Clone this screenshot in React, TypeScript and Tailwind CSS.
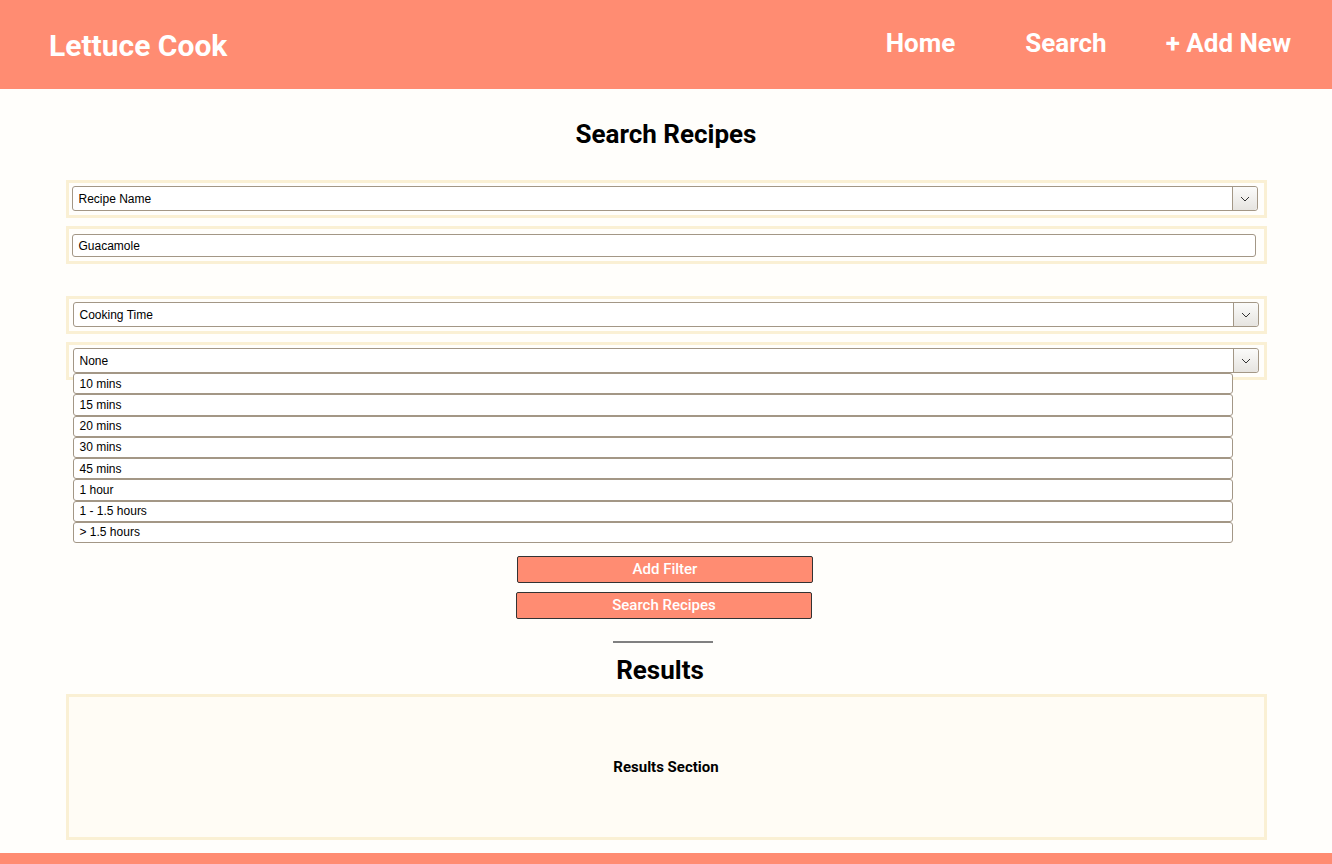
import React from "react";

const Chevron = () => (
  <svg width="10" height="6" viewBox="0 0 10 6" fill="none">
    <path d="M1 1 L5 5 L9 1" stroke="#333" strokeWidth="1" />
  </svg>
);

function SelectBox({ label }: { label: string }) {
  return (
    <div className="flex h-[25px] w-full items-stretch rounded-[3px] border border-[#a39786] bg-white">
      <div className="flex flex-1 items-center pl-[6px] text-[12px] text-black" style={{ fontFamily: '"Liberation Sans", Arial, sans-serif' }}>
        {label}
      </div>
      <div className="flex w-[25px] items-center justify-center rounded-r-[3px] border-l border-[#a39786] bg-gradient-to-b from-[#fbfbfa] to-[#e6e4e0]">
        <Chevron />
      </div>
    </div>
  );
}

const options = ["10 mins", "15 mins", "20 mins", "30 mins", "45 mins", "1 hour", "1 - 1.5 hours", "> 1.5 hours"];

export default function App() {
  const roboto = { fontFamily: 'Roboto, "Liberation Sans", sans-serif' };
  return (
    <div className="h-[864px] overflow-hidden bg-[#fffefb] flex flex-col" style={roboto}>
      <header className="flex h-[89px] shrink-0 items-center justify-between bg-[#ff8c72] pl-[49px] pr-[41px]">
        <div className="text-[30px] font-bold text-white mt-[1px]">Lettuce Cook</div>
        <nav className="flex items-center text-[26px] font-bold text-white -mt-[3px]">
          <span>Home</span>
          <span className="ml-[70px]">Search</span>
          <span className="ml-[59px]">+ Add New</span>
        </nav>
      </header>

      <main className="flex-1 flex flex-col items-center">
        <h1 className="mt-[28px] text-[26px] font-bold leading-[34px] text-black">Search Recipes</h1>

        <div className="mt-[29px] w-[1201px] flex flex-col">
          <div className="border-[3px] border-[#faf0d4] pt-[3px] pb-[4px] pl-[3px] pr-[6px]">
            <SelectBox label="Recipe Name" />
          </div>
          <div className="mt-[8px] border-[3px] border-[#faf0d4] pt-[5px] pb-[4px] pl-[3px] pr-[8px]">
            <div className="flex h-[23px] items-center rounded-[3px] border border-[#a39786] bg-white pl-[6px] text-[12px] text-black" style={{ fontFamily: '"Liberation Sans", Arial, sans-serif' }}>
              Guacamole
            </div>
          </div>

          <div className="mt-[32px] border-[3px] border-[#faf0d4] pt-[3px] pb-[4px] pl-[4px] pr-[5px]">
            <SelectBox label="Cooking Time" />
          </div>
          <div className="mt-[8px] border-[3px] border-[#faf0d4] pt-[3px] pb-[4px] pl-[4px] pr-[5px]">
            <SelectBox label="None" />
          </div>
          <div className="relative z-10 -mt-[7px] ml-[7px] w-[1160px] flex flex-col" style={{ fontFamily: '"Liberation Sans", Arial, sans-serif' }}>
            {options.map((o) => (
              <div key={o} className="flex h-[21.25px] items-center rounded-[3px] border border-[#a39786] bg-white pl-[6px] text-[12px] text-black">
                {o}
              </div>
            ))}
          </div>
        </div>

        <button className="mt-[13px] h-[27px] w-[296px] -translate-x-[1px] rounded-[2px] border border-[#333] bg-[#ff8c72] text-[15px] font-medium text-white">
          Add Filter
        </button>
        <button className="mt-[9px] h-[27px] w-[296px] -translate-x-[2px] rounded-[2px] border border-[#333] bg-[#ff8c72] text-[15px] font-medium text-white">
          Search Recipes
        </button>

        <div className="mt-[22px] h-[2px] w-[100px] bg-[#808080] -translate-x-[3px]" />
        <h2 className="mt-[11px] text-[26px] font-bold leading-[32px] text-black -translate-x-[6px]">Results</h2>

        <div className="mt-[8px] flex h-[146px] w-[1201px] items-center justify-center border-[3px] border-[#faf0d4] bg-[#fffcf5]">
          <span className="text-[15px] font-bold text-black">Results Section</span>
        </div>
      </main>

      <footer className="h-[11px] shrink-0 bg-[#ff8c72]" />
    </div>
  );
}
